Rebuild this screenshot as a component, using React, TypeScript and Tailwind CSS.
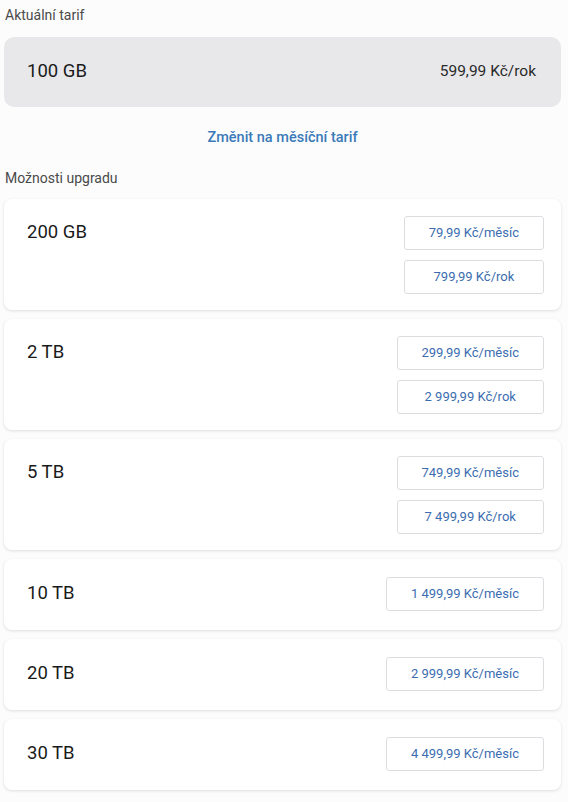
const plans = [
  { size: '200 GB', prices: ['79,99 Kč/měsíc', '799,99 Kč/rok'] },
  { size: '2 TB', prices: ['299,99 Kč/měsíc', '2 999,99 Kč/rok'] },
  { size: '5 TB', prices: ['749,99 Kč/měsíc', '7 499,99 Kč/rok'] },
  { size: '10 TB', prices: ['1 499,99 Kč/měsíc'] },
  { size: '20 TB', prices: ['2 999,99 Kč/měsíc'] },
  { size: '30 TB', prices: ['4 499,99 Kč/měsíc'] },
]

function PlanCard({ size, prices }: { size: string; prices: string[] }) {
  const single = prices.length === 1
  return (
    <div
      className={
        single
          ? 'flex items-start justify-between rounded-lg bg-white pl-[23px] pr-[17px] pt-[18px] pb-[19px] shadow-[0_1px_3px_rgba(60,64,67,0.16)]'
          : 'flex items-start justify-between rounded-lg bg-white pl-[23px] pr-[17px] pt-[17px] pb-[16px] shadow-[0_1px_3px_rgba(60,64,67,0.16)]'
      }
    >
      <div className="h-[34px] flex items-center text-[18.5px] text-[#1a1a1a]">{size}</div>
      <div className="flex flex-col gap-[10px]">
        {prices.map((p) => (
          <button
            key={p}
            className="h-[34px] px-6 rounded-[3px] border border-[#dcdde0] bg-white text-[13px] text-[#3b6db0]"
          >
            {p}
          </button>
        ))}
      </div>
    </div>
  )
}

export default function App() {
  return (
    <div className="min-h-[802px] w-[568px] bg-[#fcfcfd] font-['Roboto',sans-serif]">
      <div className="pl-[4px] pr-[7px]">
        <div className="pt-[5px] pl-[1px] text-[14px] leading-5 text-[#4a4a4a]">Aktuální tarif</div>
        <div className="mt-[12px] h-[70px] flex items-center justify-between rounded-[10px] bg-[#e8e8ea] pl-[23px] pr-[25px]">
          <span className="text-[18.5px] text-[#1a1a1a]">100 GB</span>
          <span className="text-[15.5px] text-[#2a2a2a]">599,99 Kč/rok</span>
        </div>
        <div className="mt-[21px] text-center text-[14.5px] leading-5 font-medium text-[#3a7ab8]">
          Změnit na měsíční tarif
        </div>
        <div className="mt-[20px] pl-[1px] text-[14px] leading-5 text-[#4a4a4a]">Možnosti upgradu</div>
        <div className="mt-[11px] flex flex-col gap-[9px]">
          {plans.map((plan) => (
            <PlanCard key={plan.size} size={plan.size} prices={plan.prices} />
          ))}
        </div>
      </div>
    </div>
  )
}
